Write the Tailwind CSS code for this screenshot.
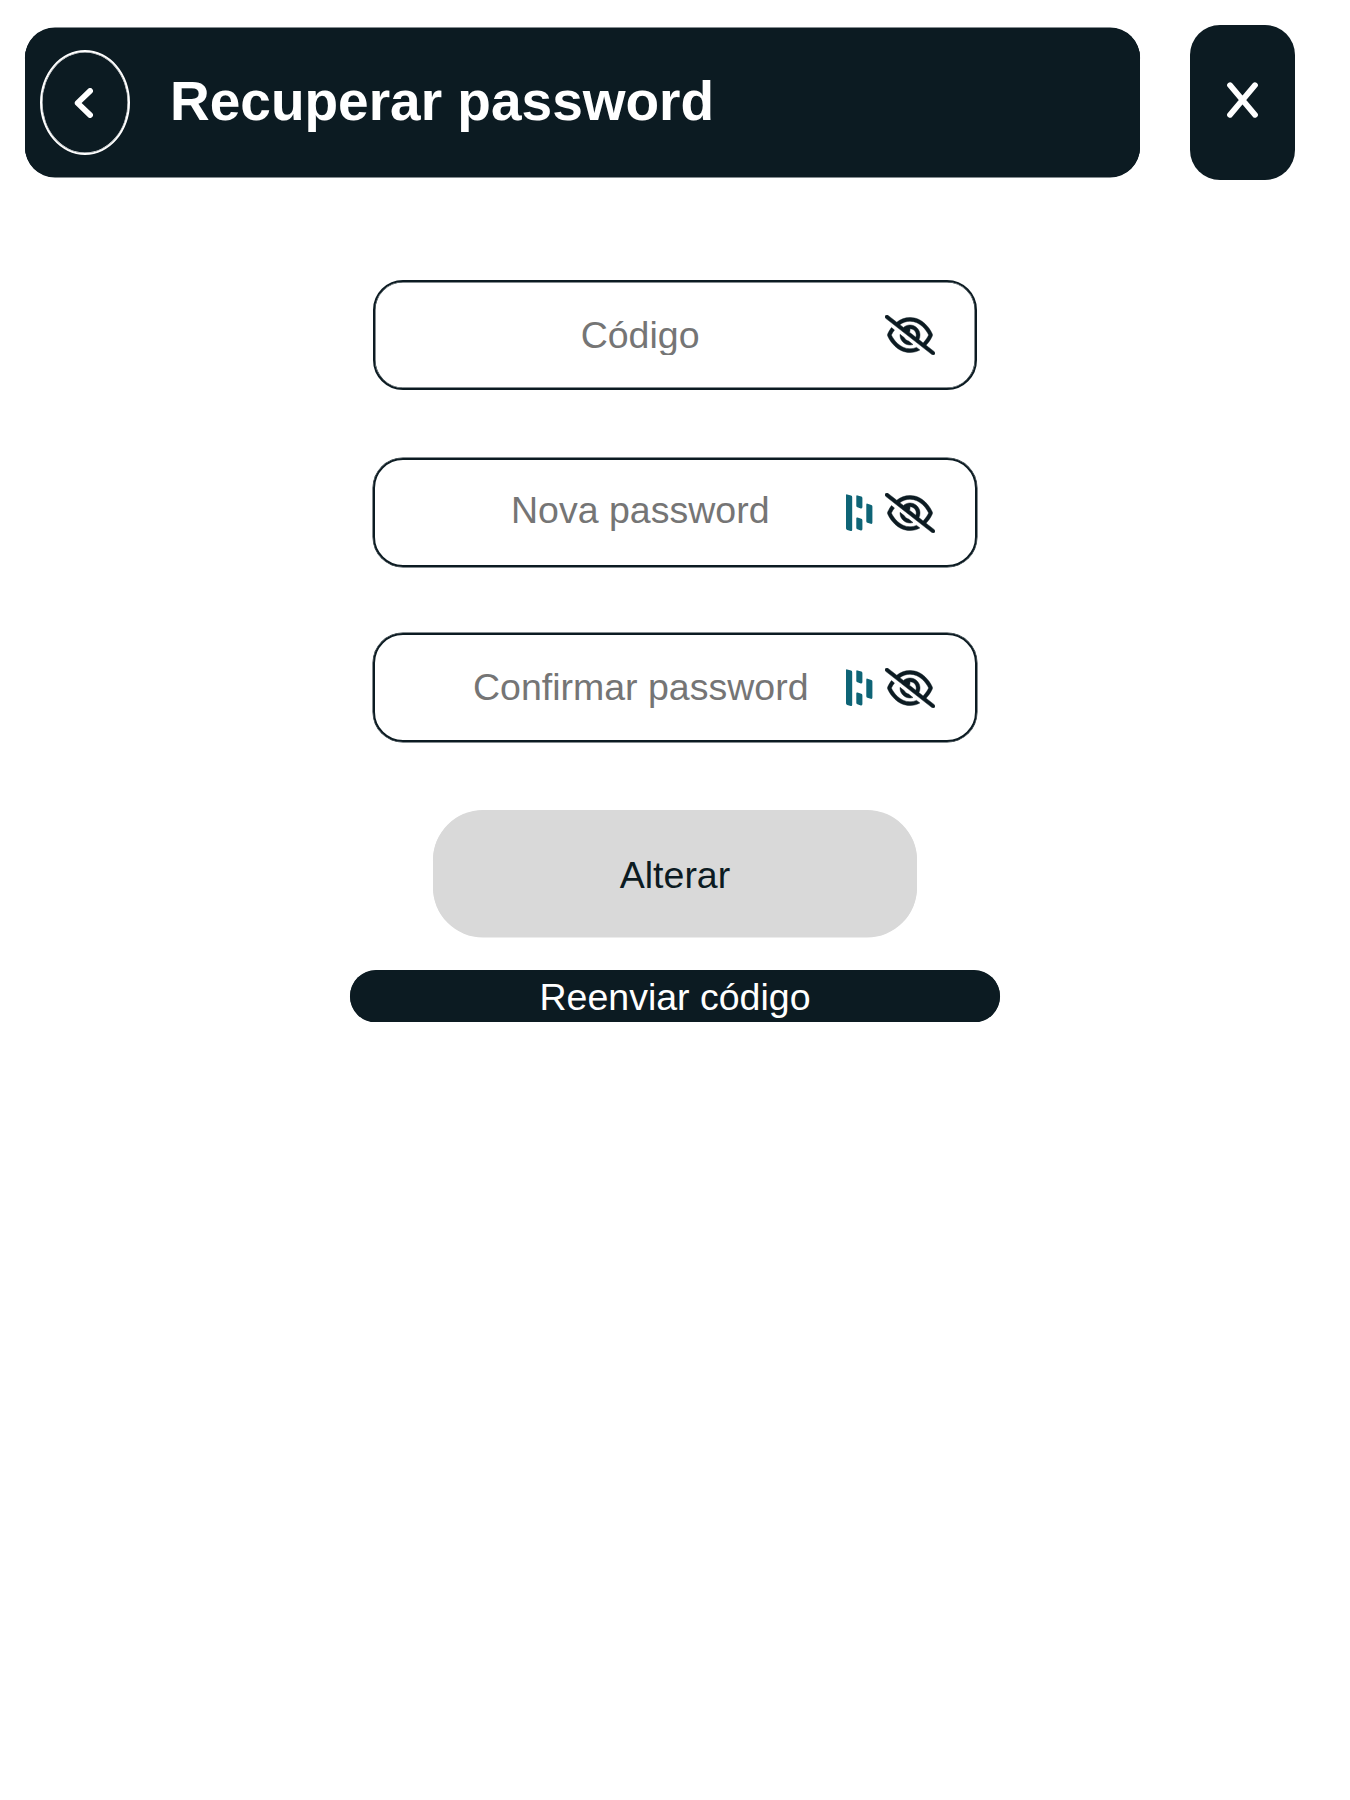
<!DOCTYPE html>
<html lang="pt">
<head>
<meta charset="utf-8">
<title>Recuperar password</title>
<script src="https://cdn.jsdelivr.net/npm/@tailwindcss/browser@4"></script>
</head>
<body class="bg-white font-['Liberation_Sans',Arial,sans-serif] text-[37.5px] leading-[42px] text-[#0c1b22]">
<svg class="hidden" aria-hidden="true">
  <symbol id="eye-slash" viewBox="0 0 640 512"><path d="M38.8 5.1C28.4-3.1 13.3-1.2 5.1 9.2S-1.2 34.7 9.2 42.9l592 464c10.4 8.2 25.5 6.3 33.7-4.1s6.3-25.5-4.1-33.7L525.6 386.7c39.6-40.6 66.4-86.1 79.9-118.4c3.3-7.9 3.3-16.7 0-24.6c-14.9-35.7-46.2-87.7-93-131.1C465.5 68.8 400.8 32 320 32c-68.2 0-125 26.3-169.3 60.8L38.8 5.1zm151 118.3C226 97.7 269.5 80 320 80c65.2 0 118.8 29.6 159.9 67.7C518.4 183.5 545 226 558.6 256c-12.6 28-36.6 66.8-70.9 100.9l-53.8-42.2c9.1-17.6 14.2-37.5 14.2-58.7c0-70.7-57.3-128-128-128c-32.2 0-61.7 11.9-84.2 31.5l-46.1-36.1zM394.9 284.2l-81.5-63.9c4.2-8.5 6.6-18.2 6.6-28.3c0-5.5-.7-10.9-2-16c.7 0 1.3 0 2 0c44.2 0 80 35.8 80 80c0 9.9-1.8 19.4-5.1 28.2zm9.4 130.3C378.8 425.4 350.7 432 320 432c-65.2 0-118.8-29.6-159.9-67.7C121.6 328.5 95 286 81.4 256c8.3-18.4 21.5-41.5 39.4-64.8L83.1 161.5C60.3 191.2 44 220.8 34.5 243.7c-3.3 7.9-3.3 16.7 0 24.6c14.9 35.7 46.2 87.7 93 131.1C174.5 443.2 239.2 480 320 480c47.8 0 89.9-12.9 126.2-32.5l-41.9-33zM192 256c0 70.7 57.3 128 128 128c13.3 0 26.1-2 38.2-5.8L302 334c-23.5-5.4-43.1-21.2-53.7-42.3l-56.1-44.2c-.2 2.8-.3 5.6-.3 8.5z"/></symbol>
  <symbol id="manager" viewBox="0 0 27 38"><path d="M0 1.2Q0 0 1.2.4L5 1.6Q6.2 2 6.2 3.2V35.8Q6.2 37.4 4.8 37L1.2 35.9Q0 35.5 0 34.3ZM10.3 2.2Q10.3 1 11.5 1.4L15.3 2.6Q16.4 3 16.4 4.2V13Q16.4 14.8 14.8 14.4L11.4 13.3Q10.3 13 10.3 11.8ZM20.3 10.7Q20.3 9.3 21.5 9.7L25.3 10.9Q26.4 11.3 26.4 12.5V28.5Q26.4 30.2 24.8 29.8L21.4 28.8Q20.3 28.4 20.3 27.2ZM10.3 24.4Q10.3 23.2 11.5 23.6L15.3 24.8Q16.4 25.2 16.4 26.4V35Q16.4 36.8 14.8 36.4L11.4 35.3Q10.3 35 10.3 33.8Z"/></symbol>
</svg>
<header class="flex items-center gap-[50px] pl-[25px] pt-[25px]">
  <div class="flex h-[149px] w-[1115px] items-center rounded-[30px] bg-[#0c1b22] pl-[15px] text-white shadow-[0_-0.5px_0_#0c1b22,0_0.5px_0_#0c1b22]">
    <button class="flex h-[105px] w-[90px] items-center justify-center rounded-[50%] border-2 border-white shadow-[inset_0_0_0_0.5px_white]" aria-label="Voltar">
      <svg class="h-[30px] w-[19px] -translate-x-[1.75px]" viewBox="0 0 19 30" fill="none" stroke="currentColor" stroke-width="5.7" stroke-linecap="round" stroke-linejoin="round"><path d="M15.9 2.9 3.3 15 15.9 27.1"/></svg>
    </button>
    <h1 class="mb-[3px] ml-10 text-[55px] leading-[64px] font-bold whitespace-nowrap">Recuperar password</h1>
  </div>
  <button class="flex h-[155px] w-[105px] items-center justify-center rounded-[30px] bg-[#0c1b22] text-white" aria-label="Fechar">
    <svg class="h-9 w-[31px] -translate-y-[3px]" viewBox="0 0 31 36" fill="none" stroke="currentColor" stroke-width="5.7" stroke-linecap="round"><path d="M3 3.2 28 32.8M28 3.2 3 32.8"/></svg>
  </button>
</header>
<main class="flex flex-col items-center pt-[100px]">
  <label class="flex h-[110px] w-[604px] items-center justify-end rounded-[30px] border-2 border-[#0c1b22] pr-[40.5px] shadow-[inset_0_0_0_0.5px_#0c1b22]">
    <span class="mr-[185px] mb-px h-[41px] overflow-hidden text-[#757575]">Código</span>
    <svg class="h-10 w-[50px] fill-current stroke-current stroke-[6px]"><use href="#eye-slash"/></svg>
  </label>
  <label class="mt-[68px] flex h-[109px] w-[604px] items-center justify-end rounded-[30px] border-2 border-[#0c1b22] pr-[40.5px] shadow-[0_0_0_0.5px_#0c1b22]">
    <span class="mr-[76px] mb-[5px] text-[#757575]">Nova password</span>
    <svg class="mr-[12px] h-[38px] w-[27px] fill-[#0e6476]"><use href="#manager"/></svg>
    <svg class="h-10 w-[50px] fill-current stroke-current stroke-[6px]"><use href="#eye-slash"/></svg>
  </label>
  <label class="mt-[66px] flex h-[109px] w-[604px] items-center justify-end rounded-[30px] border-2 border-[#0c1b22] pr-[40.5px] shadow-[0_0_0_0.5px_#0c1b22]">
    <span class="mr-[37px] mb-px text-[#757575]">Confirmar password</span>
    <svg class="mr-[12px] h-[38px] w-[27px] fill-[#0e6476]"><use href="#manager"/></svg>
    <svg class="h-10 w-[50px] fill-current stroke-current stroke-[6px]"><use href="#eye-slash"/></svg>
  </label>
  <button class="mt-[68px] h-[127px] w-[484px] rounded-[50px] bg-[#d9d9d9] pt-[3px] shadow-[0_0.5px_0_#d9d9d9]">Alterar</button>
  <button class="mt-[33px] h-[52px] w-[650px] rounded-full bg-[#0c1b22] pt-[2px] text-white shadow-[0_0.5px_0_#0c1b22]">Reenviar código</button>
</main>
</body>
</html>
